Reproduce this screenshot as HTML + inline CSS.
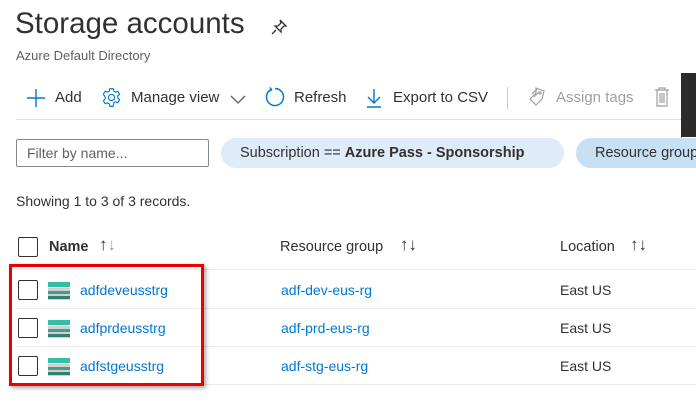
<!DOCTYPE html>
<html><head><meta charset="utf-8"><style>
*{margin:0;padding:0;box-sizing:border-box}
body{width:696px;height:411px;overflow:hidden;background:#fff;font-family:"Liberation Sans",sans-serif;color:#323130;position:relative}
.a{position:absolute;white-space:nowrap}
.t{font-size:15px}
.lnk{color:#0078d4;font-size:14px}
.cb{position:absolute;width:20px;height:20px;border:1px solid #323130;border-radius:2px;background:#fff}
.hr{position:absolute;height:1px;background:#edebe9}
.ar{font-size:17px;color:#323130}
</style></head><body>
<div class="a" style="left:15px;top:7px;font-size:29.5px;color:#323130">Storage accounts</div>
<svg class="a" style="left:269px;top:17px" width="20" height="20" viewBox="0 0 20 20" fill="none" stroke="#323130" stroke-width="1.3"><path d="M11 3l6 6-2 0-3 3 0 3-6-6 3 0 3-3z M7 13l-4 4"/></svg>
<div class="a" style="left:16px;top:48px;font-size:13px;color:#605e5c">Azure Default Directory</div>

<svg class="a" style="left:26px;top:88px" width="20" height="20" viewBox="0 0 20 20" stroke="#0078d4" stroke-width="1.4"><path d="M10 1v18M1 10h18"/></svg>
<div class="a t" style="left:55px;top:89px">Add</div>
<svg class="a" style="left:101px;top:87px" width="21" height="21" viewBox="0 0 24 24" fill="none" stroke="#0078d4" stroke-width="1.3"><circle cx="12" cy="12" r="3.5"/><path d="M10 2h4l.6 2.8 2 1.1 2.7-1 2 3.4-2.1 1.9v2.4l2.1 1.9-2 3.4-2.7-1-2 1.1L14 22h-4l-.6-2.8-2-1.1-2.7 1-2-3.4 2.1-1.9v-2.4L2.7 8.3l2-3.4 2.7 1 2-1.1z"/></svg>
<div class="a t" style="left:131px;top:89px">Manage view</div>
<svg class="a" style="left:230px;top:94px" width="16" height="10" viewBox="0 0 16 10" fill="none" stroke="#605e5c" stroke-width="1.3"><path d="M1 2l7 7 7-7"/></svg>
<svg class="a" style="left:264px;top:86px" width="22" height="22" viewBox="0 0 22 22" fill="none" stroke="#0078d4" stroke-width="1.5"><path d="M7 3.5A8.5 8.5 0 1 0 11 2.5"/><path d="M6 1.5l1.5 2.2-2.3 1.3"/></svg>
<div class="a t" style="left:294px;top:89px">Refresh</div>
<svg class="a" style="left:366px;top:88px" width="16" height="20" viewBox="0 0 16 20" fill="none" stroke="#0078d4" stroke-width="1.4"><path d="M8 1v14M2 9l6 6 6-6M1 19h14"/></svg>
<div class="a t" style="left:393px;top:89px">Export to CSV</div>
<div class="a" style="left:507px;top:87px;width:1px;height:22px;background:#c8c6c4"></div>
<svg class="a" style="left:527px;top:86px" width="20" height="22" viewBox="0 0 20 22" fill="none" stroke="#a19f9d" stroke-width="1.2"><path d="M9 2l8 3-2 8-6 6-6-6 6-6z M5 8l5-5 M7 11l5-5"/><circle cx="13" cy="7" r="1"/></svg>
<div class="a t" style="left:556px;top:89px;color:#a19f9d">Assign tags</div>
<svg class="a" style="left:654px;top:86px" width="16" height="22" viewBox="0 0 16 22" fill="none" stroke="#a19f9d" stroke-width="1.2"><path d="M1 4h14M5 4V2h6v2M3 4v16h10V4M6 7v10M8 7v10M10 7v10"/></svg>
<div class="a" style="left:681px;top:73px;width:15px;height:64px;background:#2b2b2b"></div>
<div class="a" style="left:681px;top:130px;width:0;height:0;border-top:8px solid #2b2b2b;border-right:8px solid transparent"></div>
<div class="hr" style="left:16px;top:119px;width:665px;background:#e1dfdd"></div>

<div class="a" style="left:16px;top:139px;width:193px;height:28px;border:1px solid #8a8886;border-radius:2px"></div>
<div class="a" style="left:27px;top:145px;font-size:14px;color:#605e5c">Filter by name...</div>
<div class="a" style="left:221px;top:138px;width:343px;height:30px;border-radius:15px;background:#deecf9"></div>
<div class="a" style="left:240px;top:145px;font-size:14.5px;color:#323130">Subscription == <b>Azure Pass - Sponsorship</b></div>
<div class="a" style="left:576px;top:138px;width:140px;height:30px;border-radius:15px;background:#c7e0f4"></div>
<div class="a" style="left:595px;top:145px;font-size:14.5px">Resource group</div>

<div class="a" style="left:16px;top:193px;font-size:14px">Showing 1 to 3 of 3 records.</div>

<div class="cb" style="left:18px;top:237px"></div>
<div class="a" style="left:49px;top:239px;font-size:14.5px;font-weight:bold">Name</div>
<div class="a ar" style="left:99px;top:235px">↑<span style="color:#a19f9d">↓</span></div>
<div class="a" style="left:280px;top:239px;font-size:14.5px">Resource group</div>
<div class="a ar" style="left:400px;top:235px">↑↓</div>
<div class="a" style="left:560px;top:239px;font-size:14.5px">Location</div>
<div class="a ar" style="left:630px;top:235px">↑↓</div>
<div class="hr" style="left:16px;top:269px;width:680px"></div>
<div class="hr" style="left:16px;top:308px;width:680px"></div>
<div class="hr" style="left:16px;top:346px;width:680px"></div>
<div class="hr" style="left:16px;top:384px;width:680px"></div>

<div class="cb" style="left:18px;top:280px"></div>
<div class="cb" style="left:18px;top:318px"></div>
<div class="cb" style="left:18px;top:356px"></div>
<svg class="a" style="left:48px;top:282px" width="22" height="18"><rect y="0" width="22" height="5" fill="#32bfa5"/><rect y="6" width="22" height="12" fill="#d0d0d0"/><rect y="9" width="22" height="3" fill="#4a9a8a"/><rect y="14" width="22" height="3" fill="#2f7f72"/></svg>
<svg class="a" style="left:48px;top:320px" width="22" height="18"><rect y="0" width="22" height="5" fill="#32bfa5"/><rect y="6" width="22" height="12" fill="#d0d0d0"/><rect y="9" width="22" height="3" fill="#4a9a8a"/><rect y="14" width="22" height="3" fill="#2f7f72"/></svg>
<svg class="a" style="left:48px;top:358px" width="22" height="18"><rect y="0" width="22" height="5" fill="#32bfa5"/><rect y="6" width="22" height="12" fill="#d0d0d0"/><rect y="9" width="22" height="3" fill="#4a9a8a"/><rect y="14" width="22" height="3" fill="#2f7f72"/></svg>
<div class="a lnk" style="left:80px;top:282px">adfdeveusstrg</div>
<div class="a lnk" style="left:80px;top:320px">adfprdeusstrg</div>
<div class="a lnk" style="left:80px;top:358px">adfstgeusstrg</div>
<div class="a lnk" style="left:281px;top:282px">adf-dev-eus-rg</div>
<div class="a lnk" style="left:281px;top:320px">adf-prd-eus-rg</div>
<div class="a lnk" style="left:281px;top:358px">adf-stg-eus-rg</div>
<div class="a" style="left:560px;top:282px;font-size:14px">East US</div>
<div class="a" style="left:560px;top:320px;font-size:14px">East US</div>
<div class="a" style="left:560px;top:358px;font-size:14px">East US</div>

<div class="a" style="left:9px;top:264px;width:195px;height:122px;border:3px solid #e00;box-shadow:2px 2px 4px rgba(0,0,0,.35)"></div>
</body></html>
